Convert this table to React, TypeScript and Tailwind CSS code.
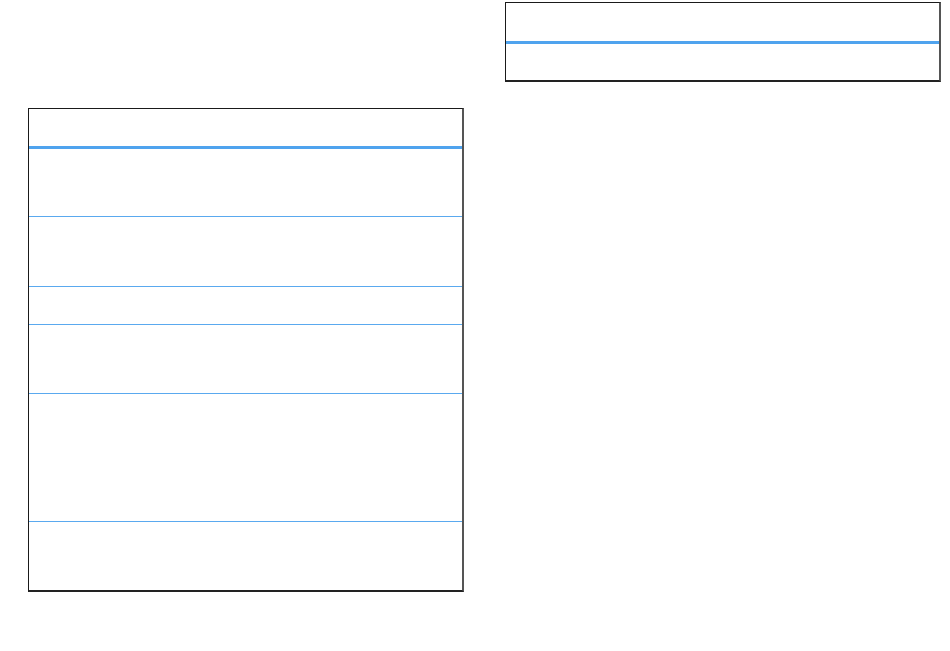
import React from 'react';

const rowHeights = [68, 70, 38, 69, 128, 68];

const Table: React.FC<{ header: number; rows: number[] }> = ({ header, rows }) => (
  <div className="w-[436px] border border-[#1a1a1a] border-r-2 border-r-[#555] border-b-2 border-b-[#222] bg-white">
    <div className="border-b-[3px] border-[#4fa3ee]" style={{ height: header }} />
    {rows.map((h, i) => (
      <div
        key={i}
        className={i < rows.length - 1 ? 'border-b-[1.5px] border-[#5aa9ef]' : ''}
        style={{ height: h }}
      />
    ))}
  </div>
);

export default function App() {
  return (
    <div className="flex items-start w-[950px] h-[651px] bg-white font-['Liberation_Sans',sans-serif]">
      <div className="ml-[28px] mt-[108px]">
        <Table header={40} rows={rowHeights} />
      </div>
      <div className="ml-[41px] mt-[2px]">
        <Table header={41} rows={[36]} />
      </div>
    </div>
  );
}
